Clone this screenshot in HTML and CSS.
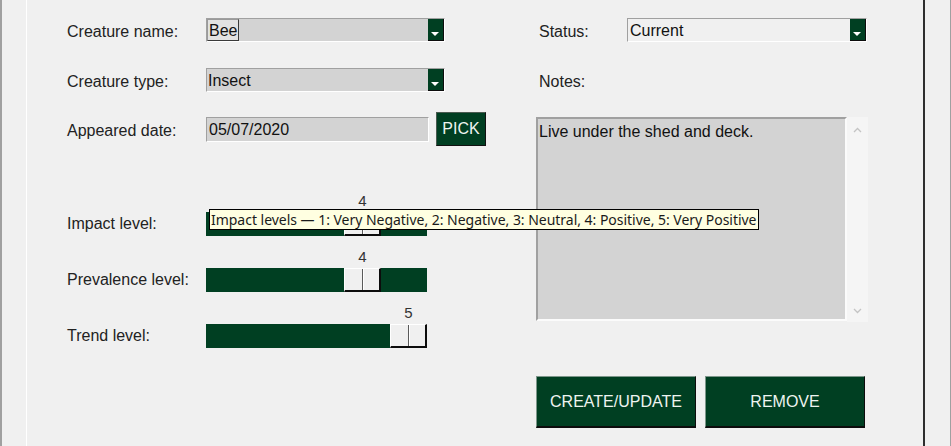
FILE: index.html
```html
<!DOCTYPE html>
<html>
<head>
<meta charset="utf-8">
<title>Creature</title>
<link rel="stylesheet" href="styles.css">
</head>
<body>
<div class="frame">
  <div class="panel">
    <div class="col-left">
      <div class="row r1">
        <span class="label">Creature name:</span>
        <div class="combo gray">
          <span class="ctext"><span class="sel">Bee</span></span>
          <span class="arrow"><svg width="16" height="22" viewBox="0 0 16 22"><polygon points="4,14 12,14 8,18" fill="#fff"/></svg></span>
        </div>
      </div>
      <div class="row r2">
        <span class="label">Creature type:</span>
        <div class="combo gray">
          <span class="ctext">Insect</span>
          <span class="arrow"><svg width="16" height="22" viewBox="0 0 16 22"><polygon points="4,14 12,14 8,18" fill="#fff"/></svg></span>
        </div>
      </div>
      <div class="row r3">
        <span class="label">Appeared date:</span>
        <div class="entry">05/07/2020</div>
        <button class="pick">PICK</button>
      </div>
      <div class="sliders">
        <div class="srow">
          <span class="label">Impact level:</span>
          <div class="slider">
            <div class="val"><span class="num" style="margin-left:138px">4</span></div>
            <div class="trough"><span class="handle" style="margin-left:138px"></span></div>
          </div>
        </div>
        <div class="srow">
          <span class="label">Prevalence level:</span>
          <div class="slider">
            <div class="val"><span class="num" style="margin-left:138px">4</span></div>
            <div class="trough"><span class="handle" style="margin-left:138px"></span></div>
          </div>
        </div>
        <div class="srow">
          <span class="label">Trend level:</span>
          <div class="slider">
            <div class="val"><span class="num" style="margin-left:184px">5</span></div>
            <div class="trough"><span class="handle" style="margin-left:184px"></span></div>
          </div>
        </div>
      </div>
    </div>
    <div class="col-right">
      <div class="row r1">
        <span class="label rlabel">Status:</span>
        <div class="combo light">
          <span class="ctext">Current</span>
          <span class="arrow"><svg width="16" height="22" viewBox="0 0 16 22"><polygon points="4,14 12,14 8,18" fill="#fff"/></svg></span>
        </div>
      </div>
      <div class="row r2">
        <span class="label rlabel">Notes:</span>
      </div>
      <div class="notes">
        <div class="textarea">Live under the shed and deck.</div>
        <div class="scroll">
          <svg width="21" height="14" viewBox="0 0 21 14"><polyline points="7,9 10.5,5.5 14,9" fill="none" stroke="#c4c4c4" stroke-width="1.3"/></svg>
          <svg width="21" height="14" viewBox="0 0 21 14"><polyline points="7,5 10.5,8.5 14,5" fill="none" stroke="#c4c4c4" stroke-width="1.3"/></svg>
        </div>
      </div>
      <div class="actions">
        <button class="btn">CREATE/UPDATE</button>
        <button class="btn">REMOVE</button>
      </div>
    </div>
  </div>
  <div class="tooltip">Impact levels — 1: Very Negative, 2: Negative, 3: Neutral, 4: Positive, 5: Very Positive</div>
</div>
</body>
</html>
```

FILE: styles.css
```css
* { box-sizing: border-box; }
html, body { margin: 0; padding: 0; }
body {
  width: 951px;
  height: 446px;
  overflow: hidden;
  background: #f0f0f0;
  font-family: "Liberation Sans", Arial, sans-serif;
  font-size: 16px;
  color: #222;
}
.frame {
  position: relative;
  display: flex;
  height: 446px;
  border-left: 2px solid #a0a0a0;
  border-right: 1px solid #a0a0a0;
  padding: 0 25px 0 24px;
}
.panel {
  flex: 1;
  display: flex;
  border-left: 1px solid #ffffff;
  border-right: 2px solid #2e2e2e;
}
.col-left {
  width: 459px;
  padding: 18px 0 0 40px;
  display: flex;
  flex-direction: column;
}
.col-right {
  margin-left: 50px;
  padding-top: 18px;
  display: flex;
  flex-direction: column;
}
.row {
  display: flex;
  align-items: center;
  height: 24px;
}
.r2 { margin-top: 26px; }
.r3 { margin-top: 20px; height: 34px; }
.label {
  width: 139px;
  flex: none;
  height: 24px;
  line-height: 27px;
  white-space: nowrap;
}
.rlabel { width: 91px; padding-left: 3px; }

.combo {
  display: flex;
  width: 239px;
  height: 24px;
  border-top: 1px solid #a0a0a0;
  border-left: 1px solid #a0a0a0;
  border-bottom: 1px solid #ffffff;
  border-right: 1px solid #ffffff;
  color: #111;
}
.combo.gray { background: #d3d3d3; }
.combo.light { background: #f0f0f0; width: 240px; }
.ctext {
  flex: 1;
  display: flex;
  line-height: 23px;
  padding-left: 1px;
}
.combo.light .ctext { padding-left: 2px; }
.sel {
  display: block;
  width: 32px;
  margin-left: -1px;
  padding-left: 1px;
  height: 22px;
  line-height: 21px;
  background: #e2e2e2;
  border: 1px solid #3a3a3a;
  border-top-color: #9a9a9a;
  border-left-color: #9a9a9a;
}
.arrow {
  width: 16px;
  height: 22px;
  background: #003f22;
  border-right: 1px solid #0c0c0c;
  border-bottom: 1px solid #0c0c0c;
  display: block;
}
.arrow svg { display: block; margin: -1px 0 0 -1px; }

.entry {
  width: 223px;
  height: 25px;
  background: #d3d3d3;
  border-top: 1px solid #a0a0a0;
  border-left: 1px solid #a0a0a0;
  border-bottom: 1px solid #ffffff;
  border-right: 1px solid #ffffff;
  line-height: 24px;
  padding-left: 2px;
  color: #111;
}
.pick {
  margin-left: 7px;
  width: 50px;
  height: 34px;
  padding: 0;
  background: #003f22;
  border: 1px solid #111;
  border-top-color: #4a5a50;
  border-left-color: #4a5a50;
  color: #eef4f0;
  font-family: "Liberation Sans", Arial, sans-serif;
  font-size: 16px;
}

.sliders {
  margin-top: 45px;
  display: flex;
  flex-direction: column;
  gap: 11px;
}
.srow {
  display: flex;
  align-items: flex-end;
}
.srow .label { line-height: 24px; }
.slider {
  width: 221px;
  display: flex;
  flex-direction: column;
}
.val {
  display: flex;
  height: 18px;
  margin-bottom: 3px;
}
.num {
  width: 37px;
  text-align: center;
  font-size: 15px;
  line-height: 19px;
  color: #333;
}
.trough {
  display: flex;
  height: 24px;
  background: #003f22;
}
.handle {
  position: relative;
  width: 37px;
  height: 24px;
  background: #f0f0f0;
  border-top: 1px solid #ffffff;
  border-left: 1px solid #ffffff;
  border-right: 2px solid #0c0c0c;
  border-bottom: 2px solid #0c0c0c;
}
.handle::after {
  content: "";
  position: absolute;
  left: 17px;
  top: 0;
  bottom: 0;
  width: 1px;
  background: #5a5a5a;
  box-shadow: 1px 0 0 #ffffff;
}

.notes {
  display: flex;
  margin-top: 25px;
}
.textarea {
  width: 311px;
  height: 204px;
  background: #d3d3d3;
  border-top: 2px solid #a0a0a0;
  border-left: 2px solid #a0a0a0;
  border-bottom: 2px solid #fbfbfb;
  border-right: 2px solid #fbfbfb;
  padding: 3px 2px 0 1px;
  line-height: 19px;
  color: #111;
}
.scroll {
  width: 21px;
  height: 205px;
  background: #f5f5f5;
  display: flex;
  flex-direction: column;
  justify-content: space-between;
  padding: 6px 0 4px;
}
.scroll svg { display: block; }

.actions {
  margin-top: 54px;
  display: flex;
  gap: 9px;
}
.btn {
  width: 160px;
  height: 52px;
  padding: 0;
  background: #003f22;
  border-top: 1px solid #7d968a;
  border-left: 1px solid #7d968a;
  border-right: 1px solid #0c0c0c;
  border-bottom: 2px solid #0c0c0c;
  color: #eef4f0;
  font-family: "Liberation Sans", Arial, sans-serif;
  font-size: 16px;
}

.tooltip {
  position: absolute;
  left: 207px;
  top: 209px;
  height: 21px;
  padding: 0 1px;
  background: #ffffe1;
  border: 1px solid #000;
  font-family: "Noto Sans", "Open Sans", sans-serif;
  font-size: 14px;
  letter-spacing: -0.025px;
  line-height: 19px;
  color: #1a1a1a;
  white-space: nowrap;
}
```
